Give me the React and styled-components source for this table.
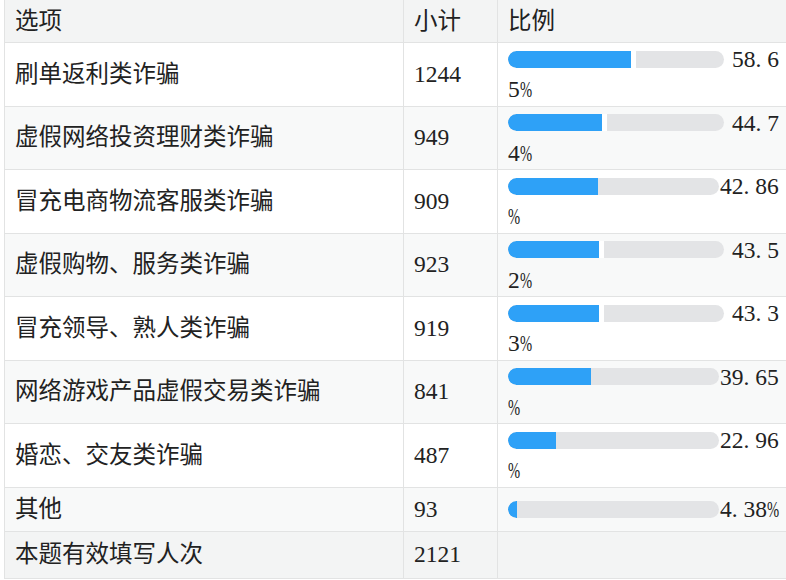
import React from 'react';
import styled, { createGlobalStyle } from 'styled-components';

const GlobalStyle = createGlobalStyle`
    html, body {
        margin: 0;
        padding: 0;
        overflow: hidden;
        background: #fff;
    }
    body {
        font-family: "Liberation Serif", "Noto Sans CJK SC", serif;
        color: #222;
    }
`;

const rows = [
    { label: '刷单返利类诈骗', count: '1244', pct: 58.65, first: '58.6', rest: '5%', gap: true },
    { label: '虚假网络投资理财类诈骗', count: '949', pct: 44.74, first: '44.7', rest: '4%', gap: true },
    { label: '冒充电商物流客服类诈骗', count: '909', pct: 42.86, first: '42.86', rest: '%', gap: false },
    { label: '虚假购物、服务类诈骗', count: '923', pct: 43.52, first: '43.5', rest: '2%', gap: true },
    { label: '冒充领导、熟人类诈骗', count: '919', pct: 43.33, first: '43.3', rest: '3%', gap: true },
    { label: '网络游戏产品虚假交易类诈骗', count: '841', pct: 39.65, first: '39.65', rest: '%', gap: false },
    { label: '婚恋、交友类诈骗', count: '487', pct: 22.96, first: '22.96', rest: '%', gap: false },
    { label: '其他', count: '93', pct: 4.38, first: '4.38%', rest: '', gap: false },
];

const Table = styled.table`
    border-collapse: collapse;
    table-layout: fixed;
    width: 786px;
    margin: -1px 0 0 4px;
    font-size: 23.5px;
`;

const HeadCell = styled.th`
    height: 42px;
    padding: 0 10px;
    text-align: left;
    font-weight: normal;
    line-height: 31px;
    background: #f3f4f4;
    border: 1px solid #e2e3e3;
`;

const Row = styled.tr`
    background: ${props => (props.striped ? '#f8f9f9' : '#fff')};
`;

const SumRow = styled.tr`
    background: #f3f4f4;
`;

const Cell = styled.td`
    padding: 6px 10px;
    height: ${props => (props.tall ? '34px' : '31px')};
    line-height: 31px;
    vertical-align: middle;
    border: 1px solid #e2e3e3;
    white-space: nowrap;
`;

const RatioCell = styled(Cell)`
    padding: 6px 10px 6px 10px;
`;

const BarLine = styled.div`
    display: flex;
    align-items: center;
    height: 20px;
    line-height: 20px;
`;

const Track = styled.div`
    flex: none;
    display: flex;
    width: ${props => (props.gap ? '216px' : '211px')};
    height: 17px;
    margin-right: ${props => (props.gap ? '8px' : '1px')};
    border-radius: 9px;
    background: #e3e4e6;
    overflow: hidden;
`;

const Fill = styled.div`
    flex: none;
    height: 100%;
    background: #2ea1f7;
    border-radius: 9px 0 0 9px;
    border-right: ${props => (props.gap ? '5px solid #fff' : 'none')};
`;

const RestLine = styled.div`
    margin-top: 10px;
    line-height: 20.5px;
`;

const Dot = styled.span`
    display: inline-block;
    width: 0.5em;
`;

const Pct = styled.span`
    display: inline-block;
    width: 0.5em;
    transform: scaleX(0.62);
    transform-origin: left center;
`;

function Num({ text }) {
    return [...text].map((ch, i) => {
        if (ch === '.') return <Dot key={i}>.</Dot>;
        if (ch === '%') return <Pct key={i}>%</Pct>;
        return ch;
    });
}

function Ratio({ row }) {
    return (
        <>
            <BarLine>
                <Track gap={row.gap}>
                    <Fill gap={row.gap} style={{ width: `${Math.round(row.pct * 2.1)}px` }} />
                </Track>
                <span><Num text={row.first} /></span>
            </BarLine>
            {row.rest && <RestLine><Num text={row.rest} /></RestLine>}
        </>
    );
}

export default function App() {
    return (
        <>
            <GlobalStyle />
            <Table>
                <colgroup>
                    <col style={{ width: '399px' }} />
                    <col style={{ width: '94px' }} />
                    <col style={{ width: '293px' }} />
                </colgroup>
                <thead>
                    <tr>
                        <HeadCell>选项</HeadCell>
                        <HeadCell>小计</HeadCell>
                        <HeadCell>比例</HeadCell>
                    </tr>
                </thead>
                <tbody>
                    {rows.map((row, i) => (
                        <Row key={row.label} striped={i % 2 === 1}>
                            <Cell>{row.label}</Cell>
                            <Cell>{row.count}</Cell>
                            <RatioCell>
                                <Ratio row={row} />
                            </RatioCell>
                        </Row>
                    ))}
                    <SumRow>
                        <Cell tall>本题有效填写人次</Cell>
                        <Cell tall>2121</Cell>
                        <RatioCell tall />
                    </SumRow>
                </tbody>
            </Table>
        </>
    );
}
